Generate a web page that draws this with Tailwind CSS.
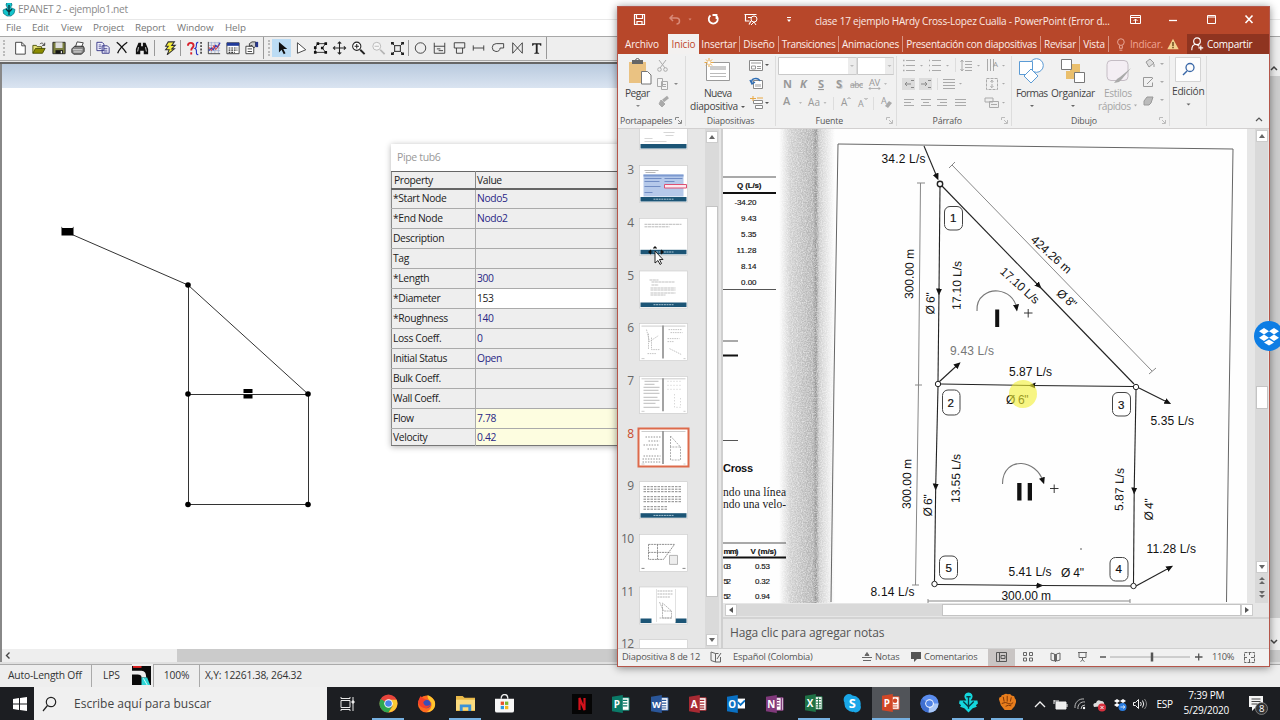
<!DOCTYPE html>
<html lang="es">
<head>
    <meta charset="UTF-8">
    <meta name="viewport" content="width=device-width, initial-scale=1.0">
    <title>EPANET 2 - ejemplo1.net</title>
    <script src="https://cdn.jsdelivr.net/npm/@tailwindcss/browser@4"></script>
</head>
<body class="relative h-[720px] w-[1280px] overflow-hidden bg-white font-['Open_Sans',sans-serif] text-[10px] leading-none text-[#333]">

    <!-- EPANET -->
    <div class="flex h-[687px] w-full flex-col bg-white">
        <div class="flex h-5 shrink-0 items-center border-b border-[#e8e8e8] pl-0.5">
            <svg class="h-[14px] w-[14px]" viewBox="0 0 14 14">
                <path d="M4 2a3 3 0 0 1 6 0l-1.500 2.500 4.500 2-1 4-3 2.500H5L1.500 10.500 1 7l4.500-2z" fill="#12c4cc" stroke="#0b6b78" stroke-width=".7"/>
                <path d="M7 2v10M4 6l3 3 3-3" stroke="#0c2f3a" stroke-width="1.300" fill="none"/>
            </svg>
            <span class="ml-0.5 text-[10.2px] tracking-[-0.3px] text-[#8a8a8a]">EPANET 2 - ejemplo1.net</span>
        </div>
        <div class="flex h-4 shrink-0 items-center text-[9.8px] tracking-[-0.1px] text-[#777]">
            <span class="w-[26px] pl-1.5">File</span>
            <span class="w-7 pl-1.5">Edit</span>
            <span class="w-[33px] pl-[7px]">View</span>
            <span class="w-[42px] pl-1.5">Project</span>
            <span class="w-[41px] pl-1.5">Report</span>
            <span class="w-[49px] pl-[7px]">Window</span>
            <span class="pl-1.5">Help</span>
        </div>
        <div class="flex h-[25px] shrink-0 items-center border-y border-[#a8a8a8] bg-[#eeeeee] pl-[3px] pb-px">
            <div class="mr-[5px] h-4 border-l-2 border-dotted border-[#bbb]"></div>
            <div class="flex w-[78px] justify-around">
                <svg class="size-[14px]" viewBox="0 0 16 16"><path d="M3 1.500h7l4 4v9.500H3z" fill="#fff" stroke="#333"/><path d="M10 1.500v4h4" fill="none" stroke="#333"/></svg>
                <svg class="size-[14px]" viewBox="0 0 16 16"><path d="M1 14V5h4l1 1.500h5V9" fill="#e8e37a" stroke="#444a00"/><path d="M1 14l3-5.500h11L12 14z" fill="#8b8b00" stroke="#444a00"/><path d="M9 3.500c2-2 4-1 5 1.500M14.500 2v3h-3" fill="none" stroke="#333"/></svg>
                <svg class="size-[14px]" viewBox="0 0 16 16"><path d="M1 1.500h14v13H1z" fill="#7c8040" stroke="#222"/><path d="M4 1.500h8V8H4z" fill="#dfdfdf"/><path d="M4 10.500h8.500v4H4z" fill="#151515"/><path d="M10 11.500h1.500v2.500H10z" fill="#eee"/></svg>
                <svg class="size-[14px]" viewBox="0 0 16 16"><path d="M5 7l2-6 7 1-2 5" fill="#fff" stroke="#333"/><path d="M1 9l3-3h10l1 2v4l-3 3H3l-2-2z" fill="#888" stroke="#222"/><path d="M2 10h11M3 12.500h9" stroke="#eee"/></svg>
            </div>
            <div class="mx-[2px] h-4 w-px bg-[#999]"></div>
            <div class="flex w-[59px] justify-around">
                <svg class="size-[14px]" viewBox="0 0 16 16"><path d="M1 1.500h6l2 2V11H1zM7 5.500h6l2 2V14H7z" fill="#f3f3ff" stroke="#2c2c80"/><path d="M3 4.500h3M3 6.500h3M3 8.500h3M9 8.500h4M9 10.500h4M9 12.500h4" stroke="#2c2c80" stroke-width=".8"/></svg>
                <svg class="size-[14px]" viewBox="0 0 16 16"><path d="M2 1.500c4 3 8 8 11 12M14 1.500C9 5 5 9 3 14" fill="none" stroke="#111" stroke-width="1.500"/></svg>
                <svg class="size-[14px]" viewBox="0 0 16 16"><path d="M4 2h3v4h2V2h3l3 7v6h-5v-4H6v4H1V9z" fill="#111"/><path d="M4 7l-1 5M12 7l1 5" stroke="#ddd"/></svg>
            </div>
            <div class="ml-[2px] mr-[5px] h-4 w-px bg-[#999]"></div>
            <div class="flex w-[20px] justify-center">
                <svg class="size-[14px]" viewBox="0 0 16 16"><path d="M6 1h7l-3 4h4l-4 4h3l-8 6.500L7 10H3l3-4H3z" fill="#f6ee3c" stroke="#333" stroke-width="1.200"/></svg>
            </div>
            <div class="mr-[3px] h-4 w-px bg-[#999]"></div>
            <div class="flex w-[78px] justify-around">
                <svg class="size-[15px]" viewBox="0 0 16 16"><path d="M1 5c0-4 6-4 6 0 0 2-2.500 2-2.500 5M4.500 12v2.500" stroke="#d8202c" stroke-width="2" fill="none"/><path d="M12 1.500c-4 0 0 5-3.500 6.500C12 9 8 14.500 12 14.500" stroke="#2a35c8" stroke-width="1.200" fill="none"/><path d="M15 1v14" stroke="#222" stroke-width="1.500" stroke-dasharray="2 1.500"/></svg>
                <svg class="size-[14px]" viewBox="0 0 16 16"><path d="M2 2h13M2 5h13M2 8h13M2 11h13M5 1v13M9 1v13M13 1v13" stroke="#9aa6cc" stroke-width=".8"/><path d="M1.500 1v13.500H15" stroke="#333" fill="none"/><path d="M2 11l3-3 2 2 3-5 2 2 3-5" stroke="#2838c0" fill="none" stroke-width="1.300"/><path d="M2 7l3 4 3-6 2 5 4-6" stroke="#d33" fill="none"/></svg>
                <svg class="size-[14px]" viewBox="0 0 16 16"><path d="M1 2h14v12.500H1z" fill="#fff" stroke="#333"/><path d="M1 2h14v3.500H1z" fill="#203a9a"/><path d="M3 8h10M3 10.500h10M3 13h7" stroke="#333" stroke-width="1.300" stroke-dasharray="2 1"/></svg>
                <svg class="size-[14px]" viewBox="0 0 16 16"><path d="M1 6h9v8.500H1z" fill="#fff" stroke="#333"/><path d="M3 9h5M3 12h5" stroke="#333"/><path d="M5 6V3l3-2h4v5l-2 2-2-3z" fill="#ccc" stroke="#333"/><path d="M12 1h3v6h-3z" fill="#27368c"/></svg>
            </div>
            <div class="ml-px mr-[4px] h-[22px] w-px bg-[#999]"></div>
            <div class="h-4 border-l-2 border-dotted border-[#bbb]"></div>
            <div class="ml-[2px] flex w-[135px] items-center justify-between">
                <div class="flex h-[18px] w-[19px] shrink-0 items-center justify-center bg-[#bcdcf4]"><svg class="size-[14px]" viewBox="0 0 16 16"><path d="M4.500 1v12l3-3 2.500 5 2-1-2.500-5H14z" fill="#111"/></svg></div>
                <svg class="h-[14px] w-[19px]" viewBox="0 0 16 16"><path d="M4.500 2v12L14 10z" fill="#fff" stroke="#333"/></svg>
                <svg class="h-[14px] w-[19px]" viewBox="0 0 16 16"><path d="M2 13V7l3-4h9l-4 5 4 5z" fill="none" stroke="#222"/><path d="M.5 11.500h3v3h-3zM.5 6h3v3h-3zM3.500 1.500h3v3h-3zM12.500 1.500h3v3h-3zM8.500 6.500h3v3h-3zM12.500 11.500h3v3h-3z" fill="#111"/></svg>
                <svg class="h-[14px] w-[19px]" viewBox="0 0 16 16"><path d="M8 1v14M1 8h14M6 3l2-2 2 2M6 13l2 2 2-2M3 6L1 8l2 2M13 6l2 2-2 2" fill="none" stroke="#222" stroke-width="1.200"/></svg>
                <svg class="h-[14px] w-[19px]" viewBox="0 0 16 16"><circle cx="6" cy="6" r="4.700" fill="#fff" stroke="#222" stroke-width="1.200"/><path d="M3.500 6h5M6 3.500v5" stroke="#222" stroke-width="1.200"/><path d="M10 10l5 5" stroke="#222" stroke-width="2.200"/></svg>
                <svg class="h-[14px] w-[19px]" viewBox="0 0 16 16"><circle cx="6" cy="6" r="4.500" fill="#f6f6f6" stroke="#b4b4b4"/><path d="M3.500 6h5" stroke="#b4b4b4"/><path d="M10 10l5 5" stroke="#b4b4b4" stroke-width="2"/></svg>
                <svg class="h-[13px] w-[19px]" viewBox="0 0 16 16"><path d="M4.500 4.500h7v7h-7zM1 1l3.500 3.500M15 1l-3.500 3.500M1 15l3.500-3.500M15 15l-3.500-3.500" fill="none" stroke="#222" stroke-width="1.200"/><path d="M0 0h3.500v3H0zM12.500 0H16v3h-3.500zM0 13h3.500v3H0zM12.500 13H16v3h-3.500z" fill="#222"/></svg>
            </div>
            <div class="ml-px mr-[2px] h-4 w-px bg-[#999]"></div>
            <div class="flex w-[135px] items-center justify-between">
                <svg class="h-[14px] w-[19px]" viewBox="0 0 16 16"><circle cx="8" cy="8" r="6" fill="none" stroke="#333"/></svg>
                <svg class="h-[14px] w-[19px]" viewBox="0 0 16 16"><path d="M2 2v12h12V2M2 6h12M5 9h4M7 11h5" fill="none" stroke="#333"/></svg>
                <svg class="h-[14px] w-[19px]" viewBox="0 0 16 16"><path d="M2 2h12v6H2zM4.500 8v6h7V8" fill="none" stroke="#333"/></svg>
                <svg class="h-[14px] w-[19px]" viewBox="0 0 16 16"><path d="M2 8h12M2 5v6M14 5v6" fill="none" stroke="#333"/></svg>
                <svg class="h-[14px] w-[19px]" viewBox="0 0 16 16"><path d="M15 3v5h-4a4.500 4.500 0 1 1-4.500-5z" fill="none" stroke="#333"/></svg>
                <svg class="h-[14px] w-[19px]" viewBox="0 0 16 16"><path d="M2.500 2v12l11-12v12z" fill="none" stroke="#333"/></svg>
                <svg class="h-[14px] w-[19px]" viewBox="0 0 16 16"><path d="M3 2.500h10.500v3h-1L11.500 4H9.300v9l1.700.8v.7H5.500v-.7l1.700-.8V4H5L4 5.500H3z" fill="#222"/></svg>
            </div>
            <div class="h-[22px] w-px bg-[#999]"></div>
        </div>
        <div class="h-[3px] shrink-0 border-b-2 border-[#666] bg-[#e6e6e6]"></div>

        <div class="flex min-h-0 grow">
            <div class="flex w-full flex-col border-l-2 border-[#888]">
                <div class="h-6 bg-linear-to-b from-[#b9cade] to-[#dae4f1]"></div>
                <div class="relative grow">
                    <!-- network map -->
                    <svg class="h-full w-full" viewBox="2 88 1278 561" preserveAspectRatio="xMinYMin meet">
                        <g stroke="#333" fill="none">
                            <path d="M72 234.500L188 285L308 394"/>
                            <path d="M188 285V504.500H308V394H188" shape-rendering="crispEdges"/>
                        </g>
                        <g fill="#000">
                            <path d="M61.500 226.500l1 1.500h10l1-1.500v9h-12z"/>
                            <circle cx="188" cy="285" r="2.800"/><circle cx="188" cy="394" r="2.800"/><circle cx="308" cy="394" r="2.800"/>
                            <circle cx="188" cy="504.500" r="2.800"/><circle cx="308" cy="504.500" r="2.800"/>
                            <path d="M243.500 389h9v4h-9zM243.500 394.500h9v4h-9z"/>
                        </g>
                    </svg>
                    <!-- property editor -->
                    <div class="absolute left-[389px] top-[56px] w-[250px] bg-white shadow-[0_1px_6px_rgba(0,0,0,0.3)]">
                        <div class="flex h-[27px] items-center pl-1.5 text-[10.5px] tracking-[-0.35px] text-[#999]">Pipe tub6</div>
                        <table class="w-full table-fixed border-collapse border-t border-l border-t-[#666] border-l-[#888] bg-[#eeeeee] text-[10.3px] leading-none tracking-[-0.35px] text-[#222]">
                            <tr class="h-[17px] border-b-2 border-[#666]"><td class="w-[84px] border-r border-[#888] pl-0.5">Property</td><td class="pl-px">Value</td></tr>
                            <tr class="h-5 border-b border-[#aaa]"><td class="border-r border-[#aaa] pb-0.5 pl-px">*Start Node</td><td class="pb-0.5 pl-px text-[#2a2785]">Nodo5</td></tr>
                            <tr class="h-5 border-b border-[#aaa]"><td class="border-r border-[#aaa] pb-px pl-px">*End Node</td><td class="pb-px pl-px text-[#2a2785]">Nodo2</td></tr>
                            <tr class="h-5 border-b border-[#aaa]"><td class="border-r border-[#aaa] pb-px pl-px">Description</td><td></td></tr>
                            <tr class="h-5 border-b border-[#aaa]"><td class="border-r border-[#aaa] pb-px pl-px">Tag</td><td></td></tr>
                            <tr class="h-5 border-b border-[#aaa]"><td class="border-r border-[#aaa] pb-px pl-px">*Length</td><td class="pb-px pl-px text-[#2a2785]">300</td></tr>
                            <tr class="h-5 border-b border-[#aaa]"><td class="border-r border-[#aaa] pb-px pl-px">*Diameter</td><td class="bg-white pb-px pl-px">153</td></tr>
                            <tr class="h-5 border-b border-[#aaa]"><td class="border-r border-[#aaa] pb-px pl-px">*Roughness</td><td class="pb-px pl-px text-[#2a2785]">140</td></tr>
                            <tr class="h-5 border-b border-[#aaa]"><td class="border-r border-[#aaa] pb-px pl-px">Loss Coeff.</td><td class="pb-px pl-px text-[#2a2785]">0</td></tr>
                            <tr class="h-5 border-b border-[#aaa]"><td class="border-r border-[#aaa] pb-px pl-px">Initial Status</td><td class="pb-px pl-px text-[#2a2785]">Open</td></tr>
                            <tr class="h-5 border-b border-[#aaa]"><td class="border-r border-[#aaa] pb-px pl-px">Bulk Coeff.</td><td></td></tr>
                            <tr class="h-5 border-b border-[#aaa]"><td class="border-r border-[#aaa] pb-px pl-px">Wall Coeff.</td><td></td></tr>
                            <tr class="h-5 border-b border-[#aaa]"><td class="border-r border-[#aaa] pb-px pl-px">Flow</td><td class="bg-[#fdfde0] pb-px pl-px text-[#2a2785]">7.78</td></tr>
                            <tr class="h-[17px] border-b border-[#777]"><td class="border-r border-[#aaa] pl-px">Velocity</td><td class="bg-[#fdfde0] pl-px text-[#2a2785]">0.42</td></tr>
                        </table>
                    </div>
                    <!-- map scrollbar, seen right of the front window -->
                    <div class="absolute right-0 -top-7 flex h-[590px] w-3 flex-col items-center justify-between bg-[#eeeeee] py-1">
                        <svg class="w-2" viewBox="0 0 8 8"><path d="M1 6l3-3 3 3" fill="none" stroke="#444" stroke-width="1.500"/></svg>
                        <div class="mb-5 mt-1 w-full grow bg-[#cdcdcd]"></div>
                        <svg class="w-2" viewBox="0 0 8 8"><path d="M1 2l3 3 3-3" fill="none" stroke="#444" stroke-width="1.500"/></svg>
                    </div>
                </div>
                <div class="flex h-[13px] shrink-0 bg-[#eeeeee]">
                    <svg class="ml-0.5 w-2" viewBox="0 0 8 13"><path d="M5.500 3.500l-3 3 3 3" fill="none" stroke="#444" stroke-width="1.400"/></svg>
                    <div class="ml-[165px] grow bg-[#cbcbcb]"></div>
                </div>
            </div>
        </div>
        <div class="flex h-[25px] shrink-0 items-center border-t-2 border-[#e0e0e0] bg-[#eeeeee] text-[10.3px] tracking-[-0.2px] text-[#333]">
            <div class="flex h-full w-[92px] items-center border-r border-t border-[#aaa] pb-0.5 pl-2">Auto-Length Off</div>
            <div class="flex h-full w-[40px] items-center border-t border-[#aaa] pb-0.5 pl-[11px]">LPS</div>
            <svg class="h-[19px] w-[19px]" viewBox="0 0 20 20"><path d="M0 0h20v20H0z" fill="#0a0a0a"/><path d="M1 0h9v2H1z" fill="#d22"/><path d="M0 5h10q5 0 5 7h-5q0-3-4-3H0z" fill="#eee"/><path d="M10 12h6l3 8h-9z" fill="#2fd6d6"/><path d="M12 13l4 7" stroke="#dff"/></svg>
            <div class="ml-0.5 flex h-full w-[47px] items-center justify-center border-x border-t border-[#aaa] pb-0.5">100%</div>
            <div class="flex h-full grow items-center border-t border-[#aaa] pb-0.5 pl-[5px]">X,Y: 12261.38, 264.32</div>
        </div>
    </div>

    <!-- PowerPoint -->
    <div class="absolute left-[617px] top-[6px] flex h-[661px] w-[653px] flex-col border border-[#b5564a] bg-[#e6e6e6] shadow-[0_1px_8px_rgba(0,0,0,0.45)]">
        <div class="flex h-[27px] shrink-0 items-center bg-[#b7472a]">
            <svg class="h-[27px] w-[196px] shrink-0" viewBox="618 7 196 27" fill="none" stroke="#fff">
                <path d="M634.500 14.500h10v10h-10zM636.500 14.500v4h6v-4M637 24.500v-3h5v3" stroke-width="1.200"/>
                <g stroke="#d98a78"><path d="M673 15l-3 3 3 3M670.500 18h6c4 0 4 6 0 6" stroke-width="1.500"/><path d="M688.500 18.500h3l-1.500 2z" fill="#d98a78" stroke="none"/></g>
                <path d="M710.500 15.500a4.500 4.500 0 1 0 5.500 0M716.500 19v-4h-4" stroke-width="1.800"/>
                <path d="M744.500 14.500h12M745.500 15v6h4M749 24.500l2-3.500M748 17.500h4" stroke-width="1.200"/><circle cx="754" cy="19" r="3"/><path d="M751 25l3-3 2 3"/>
                <path d="M787 17.500h4"/><path d="M787 19.500h4l-2 2.500z" fill="#fff" stroke="none"/>
            </svg>
            <span class="w-[315px] whitespace-nowrap pl-px text-[10px] tracking-[-0.2px] text-[#fbe9e4]">clase 17 ejemplo HArdy Cross-Lopez Cualla - PowerPoint (Error d...</span>
            <svg class="h-[27px] w-[140px] shrink-0" viewBox="1129 7 140 27" fill="none" stroke="#fff">
                <path d="M1130.500 15.500h10v8h-10zM1130.500 17.500h10M1135.500 23v-4M1133.500 21l2-2 2 2"/>
                <path d="M1169 20.500h8" stroke-width="1.300"/>
                <path d="M1207.500 15.500h8v8h-8zM1207.500 17h8" stroke-width="1"/>
                <path d="M1245.500 15.500l7 7.500M1252.500 15.500l-7 7.500" stroke-width="1.600"/>
            </svg>
        </div>
        <div class="flex h-[20px] shrink-0 items-stretch bg-[#b7472a] text-[10px] tracking-[-0.15px] text-[#fdeeea]">
            <div class="flex w-[50px] items-center pl-[7px]">Archivo</div>
            <div class="flex w-[31px] items-center justify-center bg-[#f3f1f0] text-[#c0472b]">Inicio</div>
            <div class="my-0.5 flex w-[41px] items-center justify-center border-r border-[#d99483]">Insertar</div>
            <div class="my-0.5 flex w-[39px] items-center justify-center border-r border-[#d99483]">Diseño</div>
            <div class="my-0.5 flex w-[60px] items-center justify-center border-r border-[#d99483] tracking-[-0.4px]">Transiciones</div>
            <div class="my-0.5 flex w-[64px] items-center justify-center border-r border-[#d99483] tracking-[-0.25px]">Animaciones</div>
            <div class="my-0.5 flex w-[138px] items-center justify-center whitespace-nowrap border-r border-[#d99483] tracking-[-0.25px]">Presentación con diapositivas</div>
            <div class="my-0.5 flex w-[39px] items-center justify-center border-r border-[#d99483] tracking-[-0.25px]">Revisar</div>
            <div class="my-0.5 flex w-[29px] items-center justify-center border-r border-[#d99483]">Vista</div>
            <svg class="h-[20px] w-5" viewBox="0 0 20 21" fill="none" stroke="#e9a99a"><circle cx="12" cy="8.500" r="3.500"/><path d="M10.500 12v3h3v-3M10.500 17h3"/></svg>
            <div class="flex w-[37px] items-center pl-px tracking-[-0.2px] text-[#f0a595]">Indicar.</div>
            <svg class="h-[20px] w-[14px]" viewBox="0 0 14 21"><path d="M7 5l6 11H1z" fill="#f3cf8e"/><path d="M7 8.500v4M7 13.500v1.500" stroke="#5a3a10" stroke-width="1.400"/></svg>
            <div class="ml-auto flex w-[82px] items-center bg-[#8f3420] tracking-[-0.25px] text-white">
                <svg class="h-[20px] w-5" viewBox="0 0 20 21" fill="none" stroke="#fff" stroke-width="1.200"><circle cx="10" cy="7.500" r="3.500"/><path d="M4.500 17c0-4 2-6 4-6s3 1 4 2M14 12v5M11.500 14.500h5"/></svg>
                Compartir
            </div>
        </div>

        <!-- ribbon -->
        <div class="flex h-[75px] shrink-0 border-b border-[#d2d0d0] bg-[#f1f1f1] text-[8.800px] leading-none tracking-[-0.15px] text-[#555]">
            <div class="my-0.5 flex w-[68px] flex-col justify-between border-r border-[#ddd]">
                <svg class="h-[58px] w-[67px]" viewBox="618 56 67 58" fill="none">
                    <path d="M629 62h17v21h-17z" fill="#eac282"/><path d="M632 60h11v4h-11z" fill="#666"/><path d="M635.500 60.500a2 2 0 0 1 4 0" stroke="#666"/>
                    <path d="M641.500 71.500h6l3.500 3.500v9h-9.500z" fill="#fff" stroke="#777"/>
                    <g stroke="#aaa"><path d="M659 60l6 8M666 60l-6 8"/><circle cx="659.500" cy="69.500" r="1.800"/><circle cx="665.500" cy="69.500" r="1.800"/><path d="M657.500 78.500h5v8h-5zM661.500 81.500h6v8h-6z" fill="#f4f4f4"/><path d="M663 84.500h3M663 86.500h3"/><path d="M663 101l5-4" stroke-width="3"/><path d="M661 100l4 4-3 3-3-3z" fill="#aaa"/></g>
                    <path d="M674 83h4l-2 2zM636 105h4l-2 2z" fill="#888"/>
                    <text x="625" y="97" font-size="10.200" textLength="25" fill="#444">Pegar</text>
                </svg>
                <div class="flex justify-between pr-[3px] pl-0.5">Portapapeles<svg class="size-[7px]" viewBox="0 0 7 7" fill="none" stroke="#888"><path d="M.5 3V.5H4M3 3l3 3M6.500 3v3.500H3"/></svg></div>
            </div>
            <div class="my-0.5 flex w-[90px] flex-col justify-between border-r border-[#ddd]">
                <svg class="h-[58px] w-[89px]" viewBox="686 56 89 58" fill="none">
                    <path d="M706.500 62.500h23v18h-23z" fill="#fff" stroke="#999"/><path d="M710 66h16v4h-16z" fill="#ccc"/><path d="M710 73.500h16M710 76.500h16" stroke="#bbb"/>
                    <path d="M709 58v9M704.500 62.500h9M706 59.500l6 6M712 59.500l-6 6" stroke="#e8a845"/><circle cx="709" cy="62.500" r="1.500" fill="#fff"/>
                    <path d="M749.500 60.500h13v10h-13z" fill="#fff" stroke="#888"/><path d="M751 63h10M751.500 66h4v3h-4zM757 66.500h4M757 68.500h4" stroke="#999"/>
                    <path d="M753.500 80.500h9v8h-9z" fill="#fff" stroke="#888"/><path d="M755 84h6v3h-6z" fill="#ccc"/><path d="M752 83c-2-5 6-6 8-2M750 80l2 4 3-2" stroke="#2f6eb5" stroke-width="1.500"/>
                    <path d="M753.500 100.500h9v3h-9zM755.500 105.500h7v3h-7z" fill="#fff" stroke="#888"/><path d="M750 98.500h6M753 96v5M757 98h6" stroke="#e8a845"/>
                    <path d="M765 64h4l-2 2zM765 102h4l-2 2zM741 106h4l-2 2z" fill="#555"/>
                    <text x="704" y="97" font-size="10.200" textLength="28" fill="#444">Nueva</text>
                    <text x="690" y="110" font-size="10.200" textLength="48" fill="#444">diapositiva</text>
                </svg>
                <div class="text-center">Diapositivas</div>
            </div>
            <div class="my-0.5 flex w-[121px] flex-col justify-between border-r border-[#ddd]">
                <svg class="h-[58px] w-[120px]" viewBox="776 56 120 58" fill="none">
                    <path d="M778.500 57.500h78v17h-78zM857.500 57.500h36v17h-36z" fill="#fff" stroke="#c9c9c9"/><path d="M848 58h8.500v16H848zM885 58h8.500v16H885z" fill="#ececec"/>
                    <path d="M850 65h4l-2 2zM887.500 65h4l-2 2zM884 83h3l-1.500 2zM799 102h3l-1.500 2zM823.500 102h3l-1.500 2z" fill="#bbb"/>
                    <g fill="#999" font-weight="bold" font-size="11"><text x="783" y="88">N</text><text x="800" y="88" font-style="italic">K</text><text x="818" y="88" text-decoration="underline">S</text><text x="837" y="88.500" fill="#ccc">S</text><text x="836" y="88">S</text><text x="783" y="105" font-weight="600">A</text></g>
                    <text x="850" y="88" font-size="8.500" textLength="13" fill="#999" text-decoration="line-through">abc</text>
                    <text x="869" y="86" font-size="9.500" textLength="11" fill="#999">AV</text><path d="M869 88.500h11M870.500 87l-1.500 1.500 1.500 1.500M878.500 87l1.500 1.500-1.500 1.500" stroke="#999" stroke-width=".7"/>
                    <text x="808" y="106" font-size="10" textLength="12" fill="#999">Aa</text>
                    <text x="841" y="106" font-size="10" fill="#999">A</text><path d="M847.500 99l1.500-1.500 1.500 1.500M864.500 98l1.500 1.500 1.500-1.500" stroke="#999"/>
                    <text x="858" y="107" font-size="9" fill="#999">A</text><text x="881" y="104" font-size="9" fill="#999">A</text><path d="M885 106l4-5 3 2-4 5z" fill="#aaa"/>
                    <path d="M833.500 97v13M873.500 97v13" stroke="#ddd"/>
                </svg>
                <div class="flex justify-end pr-[3px]"><span class="mr-[43px]">Fuente</span><svg class="size-[7px]" viewBox="0 0 7 7" fill="none" stroke="#bbb"><path d="M.5 3V.5H4M3 3l3 3M6.500 3v3.500H3"/></svg></div>
            </div>
            <div class="my-0.5 flex w-[115px] flex-col justify-between border-r border-[#ddd]">
                <svg class="h-[58px] w-[114px]" viewBox="897 56 114 58" fill="none" stroke="#aaa">
                    <path d="M906 60.500h9M906 65.500h9M906 70.500h9M932 60.500h9M932 65.500h9M932 70.500h9"/><path d="M903 60.500h1.500M903 65.500h1.500M903 70.500h1.500M929 60.500h1M929 65.500h1M929 70.500h1" stroke-width="1.500"/>
                    <path d="M920 65h3l-1.500 1.500zM946 65h3l-1.500 1.500zM977 65h3l-1.500 1.500zM1002 65h3l-1.500 1.500zM1002 83h3l-1.500 1.500zM1002 102h3l-1.500 1.500zM959 83h3l-1.500 1.500z" fill="#aaa" stroke="none"/>
                    <path d="M902 78h13v12h-13zM919 78h13v12h-13z" fill="#dcdcdc" stroke="none"/><path d="M911 84h-6M907 82l-2 2 2 2M921 84h6M925 82l2 2-2 2M911 80.500h3M911 87.500h3M928 80.500h3M928 87.500h3" stroke="#888"/>
                    <path d="M955.500 58v14M937.500 78v12" stroke="#ddd"/>
                    <path d="M965 61.500h7M965 64.500h7M965 67.500h7M965 70.500h7M962 60v11M960.500 62l1.500-2 1.500 2M960.500 69l1.500 2 1.500-2"/>
                    <path d="M987.500 59v12M990.500 59v12M993.500 59v12"/><text x="993" y="67" font-size="8" fill="#999" stroke="none">A</text>
                    <path d="M943 79.500h12M943 82.500h12M943 85.500h12M943 88.500h12"/>
                    <path d="M986.500 78.500h11v11h-11zM992 80v8M990.500 82l1.500-2 1.500 2M990.500 86l1.500 2 1.500-2" stroke-dasharray="3 1"/>
                    <path d="M904 99.500h10M904 102.500h7M904 105.500h10M921 99.500h10M923 102.500h6M921 105.500h10M937 99.500h10M940 102.500h7M937 105.500h10M955 99.500h11M955 102.500h11M955 105.500h11"/>
                    <path d="M985 98h8v4h-8zM989.500 101.500h9v6h-9zM991 104.500h6" fill="#eee"/>
                </svg>
                <div class="flex justify-end pr-[3px]"><span class="mr-[39px]">Párrafo</span><svg class="size-[7px]" viewBox="0 0 7 7" fill="none" stroke="#bbb"><path d="M.5 3V.5H4M3 3l3 3M6.500 3v3.500H3"/></svg></div>
            </div>
            <div class="my-0.5 flex w-[158px] flex-col justify-between border-r border-[#ddd]">
                <svg class="h-[58px] w-[157px]" viewBox="1012 56 157 58" fill="none">
                    <circle cx="1036.500" cy="65.500" r="6.800" fill="#fff" stroke="#5b9bd5"/><path d="M1019.500 61.500h13v13h-13z" fill="#fff" stroke="#5b9bd5"/><path d="M1031 69l7 7-7 7-7-7z" fill="#fff" stroke="#5b9bd5"/>
                    <path d="M1070 64h10v9h-10zM1066 71h9v8h-9z" fill="#eabf6c"/><path d="M1061.500 59.500h10v10h-10zM1074.500 72.500h10v10h-10z" fill="#fff" stroke="#777"/>
                    <rect x="1107" y="60.500" width="21" height="20" rx="4" fill="#f4eef4" stroke="#c4bcc4"/><path d="M1131 68l-9 11-3 3-5 1 3-4 3-2z" fill="#aaa"/>
                    <g stroke="#999"><path d="M1146 62l4-3 4 4-5 4zM1154 64v3" fill="#ddd"/><path d="M1143.500 77.500h9M1143.500 77.500v9h9v-4M1147 84l6-6" /><path d="M1144 101l3-4h6l-2 6-2 2h-5z" fill="#bbb"/></g>
                    <path d="M1160 63h4l-2 2zM1160 81h4l-2 2zM1160 99h4l-2 2zM1134 104.500h3l-1.500 2z" fill="#aaa"/>
                    <path d="M1030 105h4l-2 2zM1071 105h4l-2 2z" fill="#666"/>
                    <g font-size="10.200" fill="#444"><text x="1016" y="97" textLength="32">Formas</text><text x="1051" y="97" textLength="44">Organizar</text></g>
                    <g font-size="10.200" fill="#a5a5a5"><text x="1104" y="97" textLength="28">Estilos</text><text x="1098" y="110" textLength="33">rápidos</text></g>
                </svg>
                <div class="flex justify-end pr-[3px]"><span class="mr-[62px]">Dibujo</span><svg class="size-[7px]" viewBox="0 0 7 7" fill="none" stroke="#bbb"><path d="M.5 3V.5H4M3 3l3 3M6.500 3v3.500H3"/></svg></div>
            </div>
            <div class="my-0.5 w-[37px] border-r border-[#ddd]">
                <svg class="h-[58px] w-9" viewBox="1170 56 36 58" fill="none">
                    <path d="M1175.500 57.500h25v24h-25z" fill="#fdfdfd" stroke="#d4d4d4"/><circle cx="1190" cy="67.500" r="4" stroke="#3a68a8" stroke-width="1.300"/><path d="M1187 71l-4 4" stroke="#3a68a8" stroke-width="1.500"/>
                    <text x="1172" y="95" font-size="10.200" textLength="32.500" fill="#444">Edición</text><path d="M1186.500 103.500h4l-2 2z" fill="#666"/>
                </svg>
            </div>
            <div class="flex grow items-end justify-end p-1.5"><svg class="w-2" viewBox="0 0 8 6"><path d="M1 5l3-3 3 3" fill="none" stroke="#555" stroke-width="1.200"/></svg></div>
        </div>

        <div class="flex min-h-0 grow">
            <!-- slide thumbnails -->
            <div class="h-full w-[87px] shrink-0 overflow-hidden">
                <svg class="h-[519px] w-[87px]" viewBox="618 129 87 519">
                    <defs>
                        <g id="page"><rect width="48" height="37" fill="#fff" stroke="#c9c9c9" stroke-width=".6"/></g>
                        <g id="foot"><rect x="1" y="31.500" width="46" height="4.500" fill="#1c5576"/><path d="M14 33.700h20" stroke="#a9c4d3" stroke-width="1" stroke-dasharray="2 .6"/></g>
                        <g id="book"><path d="M23.500 2v33" stroke="#999" stroke-width="1.800"/><path d="M2 2.500h44M2 35h3M46 35h-2" stroke="#999" stroke-width=".5"/></g>
                    </defs>
                    <g transform="translate(639.500 112.500)"><use href="#page"/><rect x="1" y="31.500" width="46" height="4.500" fill="#1c5576"/><path d="M24 20h11M26 23h8M5 26h8M5 29h22" stroke="#bbb" stroke-width=".6"/></g>
                    <g transform="translate(639.500 165.500)"><use href="#page"/><path d="M5 5h14M6 7h10" stroke="#999" stroke-width=".7"/><path d="M4 9h40v22H4z" fill="#b5c9ea"/><path d="M4 9h40v2H4z" fill="#7d9ad0"/><path d="M5 13h17M5 16h15M5 21h16M25 13h18M25 16h10M5 27h8" stroke="#5f7dba" stroke-width=".8"/><path d="M25 19h22v3.500H25z" fill="#fbe9ef" stroke="#dd5072"/><use href="#foot"/></g>
                    <g transform="translate(639.500 218.300)"><use href="#page"/><path d="M5 6h37M5 8.500h25" stroke="#aaa" stroke-width=".8" stroke-dasharray="3 .5"/><use href="#foot"/></g>
                    <g transform="translate(639.500 271)"><use href="#page"/><path d="M10 9h9M12 11h23M12 14h7M11 17h25M11 19h25M11 22h25M11 24h15" stroke="#999" stroke-width=".6" stroke-dasharray="3 .4"/><use href="#foot"/></g>
                    <g transform="translate(639.500 323.600)"><use href="#page"/><use href="#book"/><path d="M7 6l3 12 9-6M9 10v16M12 14v12h8M29 6h13M31 9h12M28 15h12M28 18h6M30 25l12 6M8 30h9" stroke="#aaa" stroke-width=".7" stroke-dasharray="1.500 .8" fill="none"/></g>
                    <g transform="translate(639.500 376.300)"><use href="#page"/><use href="#book"/><path d="M5 5h14M5 8h10M4 11h16M4 14h15M4 17h16M4 21h14M4 24h16M4 27h12M4 31h16" stroke="#aaa" stroke-width=".8"/><path d="M28 5h15M28 9h15M28 13h15M35 18v13h6V22" stroke="#bbb" stroke-width=".8" stroke-dasharray="1 2" fill="none"/></g>
                    <g transform="translate(639.500 429)"><rect x="-1" y="-.5" width="50" height="38" fill="#fff" stroke="#dd6a4b" stroke-width="2"/><use href="#book"/><path d="M6 8h15M9 12h11M4 16h16M8 20h10M4 27h17M3 30h18M3 33h18" stroke="#888" stroke-width=".9" stroke-dasharray="1.500 1.200"/><path d="M31 7l10 11H31V31H41V18M31 7v11" stroke="#999" stroke-width=".8" fill="none" stroke-dasharray="2 1"/></g>
                    <g transform="translate(639.500 481.700)"><use href="#page"/><path d="M4 5h38M4 7.500h38M4 10h38M4 15h38M4 17.500h38M4 20h38M4 25h24M4 27.500h24" stroke="#888" stroke-width="1" stroke-dasharray="2.500 1"/><use href="#foot"/></g>
                    <g transform="translate(639.500 534.400)"><use href="#page"/><path d="M9 10h26L24 25H9zM9 18h22M18 10v15" stroke="#777" stroke-width=".8" fill="none" stroke-dasharray="2 .7"/><path d="M30 21h8v9h-8z" fill="#eee" stroke="#999" stroke-width=".7"/><path d="M2 34h3M46 34h-3" stroke="#888"/></g>
                    <g transform="translate(639.500 587)"><use href="#page"/><rect x="1" y="31.500" width="46" height="4.500" fill="#1c5576"/><path d="M12 1h24v35H12z" fill="#fff"/><path d="M17 2v33M36 2v33" stroke="#ccc" stroke-width=".6"/><path d="M18 4h15M18 7h15M18 10h13M20 15l4 9h8l-9-8v15h9V24M20 31h13" stroke="#999" stroke-width=".7" stroke-dasharray="2 .6" fill="none"/></g>
                    <g transform="translate(639.500 639.700)"><use href="#page"/></g>
                    <g fill="#666" font-size="12" text-anchor="end">
                        <text x="634" y="174">3</text><text x="634" y="226.500">4</text><text x="634" y="279.500">5</text><text x="634" y="332">6</text><text x="634" y="384.500">7</text>
                        <text x="634" y="437.500" fill="#c9492b">8</text><text x="634" y="490">9</text><text x="634" y="543" textLength="13">10</text><text x="634" y="595.500" textLength="13">11</text><text x="634" y="647.500" textLength="13">12</text>
                    </g>
                    <!-- mouse pointer -->
                    <path d="M655 251v12l3-2.500 2 4 1.500-1-2-4h3.500z" fill="#fff" stroke="#111" stroke-width=".9"/>
                    <path d="M649 252h2.500M651 250l-2 2 2 2M660.500 252h2M661 250l2 2-2 2M653.500 248.500l1.500-1.500 1.500 1.500" stroke="#111" fill="none" stroke-width="1.300"/>
                </svg>
            </div>
            <div class="flex w-[14px] shrink-0 flex-col items-center bg-[#dadada] py-0.5">
                <div class="flex h-3 w-3 shrink-0 items-center justify-center border border-[#ccc] bg-white"><svg class="w-1.5" viewBox="0 0 6 4"><path d="M0 4l3-4 3 4z" fill="#666"/></svg></div>
                <div class="mt-[63px] h-[391px] w-3 border border-[#c4c4c4] bg-white"></div>
                <div class="mt-auto flex h-3 w-3 shrink-0 items-center justify-center border border-[#ccc] bg-white"><svg class="w-1.5" viewBox="0 0 6 4"><path d="M0 0l3 4 3-4z" fill="#666"/></svg></div>
            </div>
            <div class="ml-[2px] flex min-w-0 grow flex-col border-l-2 border-[#cfcfcf]">
                <div class="flex h-[474px] shrink-0">
                    <!-- scanned page -->
                    <svg class="h-[474px] w-[524px] shrink-0 bg-[#fefefe] font-['Liberation_Sans',Arial,sans-serif]" viewBox="723 129 524 474">
                        <defs>
                            <linearGradient id="spine"><stop offset="0" stop-color="#888" stop-opacity="0"/><stop offset=".2" stop-color="#888" stop-opacity=".4"/><stop offset=".6" stop-color="#888" stop-opacity=".65"/><stop offset=".66" stop-color="#777" stop-opacity=".8"/><stop offset=".72" stop-color="#999" stop-opacity=".5"/><stop offset="1" stop-color="#999" stop-opacity="0"/></linearGradient>
                            <filter id="grain" x="0" y="0" width="1" height="1"><feTurbulence type="fractalNoise" baseFrequency=".8" numOctaves="2" seed="4"/><feColorMatrix values="0 0 0 0 1  0 0 0 0 1  0 0 0 0 1  1.200 0 0 0 -.4"/><feComposite in2="SourceGraphic" operator="in"/></filter>
                            <marker id="tip" viewBox="0 0 8 8" refX="4" refY="4" markerWidth="7" markerHeight="7" markerUnits="userSpaceOnUse" orient="auto"><path d="M0 .5L8 4L0 7.500z" fill="#111"/></marker>
                        </defs>
                        <path d="M779 129h56v474h-56z" fill="url(#spine)"/>
                        <path d="M779 129h56v474h-56z" fill="#fff" filter="url(#grain)"/>

                        <g stroke="#555"><path d="M723 177h53M723 289.500h53M723 341h15M723 440.500h15M723 543h63"/></g>
                        <path d="M723 193h53M723 355.500h15M723 557.500h63" stroke="#111" stroke-width="2.200"/>
                        <g font-size="8" fill="#111" stroke="#111" stroke-width=".15" text-anchor="end">
                            <text x="761.500" y="188" font-weight="bold" textLength="24.500">Q (L/s)</text>
                            <text x="756.500" y="204.500" textLength="22">-34.20</text><text x="756.500" y="220.500" textLength="15.500">9.43</text><text x="756.500" y="236.500" textLength="15.500">5.35</text><text x="756.500" y="252.500" textLength="20">11.28</text><text x="756.500" y="268.500" textLength="15.500">8.14</text><text x="756.500" y="284.500" textLength="15.500">0.00</text>
                            <text x="770" y="569" textLength="15">0.53</text><text x="770" y="584" textLength="15">0.32</text><text x="770" y="599" textLength="15">0.94</text>
                            <text x="731" y="569" textLength="7.500">03</text><text x="731" y="584" textLength="7.500">52</text><text x="731" y="599" textLength="7.500">52</text>
                            <text x="738.500" y="554" font-weight="bold" textLength="15">mm)</text><text x="776.500" y="554" font-weight="bold" textLength="26">V (m/s)</text>
                        </g>
                        <text x="723" y="472" font-size="11" font-weight="bold" textLength="30" fill="#111">Cross</text>
                        <g class="font-['Liberation_Serif',serif]" font-size="11.500" fill="#222"><text x="723" y="495.500" textLength="63">ndo una línea</text><text x="723" y="508" textLength="63">ndo una velo-</text></g>

                        <path d="M831 602L834 380L838 144L1233 149L1229 410L1226.500 602" fill="none" stroke="#666"/>
                        <g stroke="#888" fill="none">
                            <path d="M920.500 183L918.500 385L915.500 585M917 183h8M915 385h7M912 585h7M952 165L1152 371M949 168l6-6M1149 374l7-6M928 601h202M928 599v4M1130 599v4"/>
                        </g>
                        <g stroke="#222" stroke-width="1.100" fill="none">
                            <path d="M924 146L937 177" marker-end="url(#tip)"/>
                            <path d="M940 187L939 292" marker-end="url(#tip)"/><path d="M939 292L938 381"/>
                            <path d="M942 186L1039 286" marker-end="url(#tip)"/><path d="M1039 286L1134 384"/>
                            <path d="M1133 386.500L1032 385.500" marker-end="url(#tip)"/><path d="M1032 385.500L941 384"/>
                            <path d="M938 387L935.700 487" marker-end="url(#tip)"/><path d="M935.700 487L934.500 581"/>
                            <path d="M1136 390L1134.200 491" marker-end="url(#tip)"/><path d="M1134.200 491L1133.500 583"/>
                            <path d="M937 584.500L1040 585.500" marker-end="url(#tip)"/><path d="M1040 585.500L1131 586"/>
                            <path d="M939 382L958 364.500" marker-end="url(#tip)"/>
                            <path d="M1139 388L1168 402.500" marker-end="url(#tip)"/>
                            <path d="M1136 586L1170 567.500" marker-end="url(#tip)"/>
                            <path d="M977 311c-1-15 12-21 21-20s17 7 18.500 17" stroke="#777" marker-end="url(#tip)"/>
                            <path d="M1002.500 484c0-15 10-21 19-20.500s18 7 21.500 17.500" stroke="#777" marker-end="url(#tip)"/>
                            <path d="M1024 313h8.500M1028.200 309v8.500M1050 488.500h8.500M1054.200 484.500v8.500" stroke-width=".9"/>
                        </g>
                        <g fill="#fff" stroke="#222">
                            <circle cx="940" cy="184" r="2.700" stroke-width="1.400"/><circle cx="938" cy="384" r="2.700"/><circle cx="1136" cy="387" r="2.700"/><circle cx="934.500" cy="584" r="2.700"/><circle cx="1133.500" cy="586" r="2.700"/>
                            <g stroke="#444"><rect x="944.500" y="206.500" width="18" height="23.500" rx="5.500"/><rect x="942.500" y="390" width="17.500" height="25" rx="5.500"/><rect x="1112.500" y="392.500" width="18" height="23.500" rx="5.500"/><rect x="939.500" y="556" width="18" height="23" rx="5.500"/><rect x="1110" y="557.500" width="18" height="23.500" rx="5.500"/></g>
                        </g>
                        <path d="M995.200 309.500h4v17.500h-4zM1017.200 483h4.300v17.500h-4.300zM1027.700 483h4.300v17.500h-4.300z" fill="#111"/>
                        <g font-size="12" fill="#111">
                            <g stroke="#111" stroke-width=".2" font-size="11.500"><text x="950" y="222">1</text><text x="947.500" y="407">2</text><text x="1118" y="408.500">3</text><text x="945.500" y="571.500">5</text><text x="1115.500" y="573">4</text></g>
                            <text x="881.500" y="163" textLength="44">34.2 L/s</text>
                            <text x="1009" y="375.500" textLength="43">5.87 L/s</text>
                            <text x="1006" y="404" textLength="22.500">Ø 6"</text>
                            <text x="1150.500" y="425" textLength="43.500">5.35 L/s</text>
                            <text x="1008.500" y="575.500" textLength="43">5.41 L/s</text>
                            <text x="1061" y="577" textLength="23">Ø 4"</text>
                            <text x="1001.500" y="599.500" textLength="49.500">300.00 m</text>
                            <text x="1146.500" y="553" textLength="49.500">11.28 L/s</text>
                            <text x="870.500" y="595.500" textLength="44">8.14 L/s</text>
                            <text x="950" y="354.500" textLength="44" fill="#777">9.43 L/s</text>
                            <g text-anchor="middle">
                                <text transform="translate(913.500 274) rotate(-89)" textLength="50">300.00 m</text>
                                <text transform="translate(934.500 303.500) rotate(-89)" textLength="22">Ø 6"</text>
                                <text transform="translate(961 285.500) rotate(-89)" textLength="49">17.10 L/s</text>
                                <text transform="translate(911 484) rotate(-89)" textLength="50">300.00 m</text>
                                <text transform="translate(932 505.500) rotate(-89)" textLength="22">Ø 6"</text>
                                <text transform="translate(960 478.500) rotate(-89)" textLength="49">13.55 L/s</text>
                                <text transform="translate(1123.500 489.500) rotate(-89)" textLength="43">5.87 L/s</text>
                                <text transform="translate(1153 509.500) rotate(-89)" textLength="22">Ø 4"</text>
                                <text transform="translate(1048.500 257.500) rotate(42)" textLength="50">424.26 m</text>
                                <text transform="translate(1017 288.500) rotate(42)" textLength="48">17.10 L/s</text>
                                <text transform="translate(1064 301.500) rotate(42)" textLength="22">Ø 8"</text>
                            </g>
                        </g>
                        <circle cx="1023" cy="394" r="14" fill="#f2ee30" fill-opacity=".6"/>
                        <circle cx="1081" cy="549" r=".7" fill="#222"/>
                    </svg>
                    <div class="ml-[8px] flex w-[13px] shrink-0 flex-col items-center bg-[#d9d9d9] py-px">
                        <div class="flex h-3 w-3 shrink-0 items-center justify-center border border-[#ccc] bg-white"><svg class="w-1.5" viewBox="0 0 6 4"><path d="M0 4l3-4 3 4z" fill="#666"/></svg></div>
                        <div class="mt-[244px] h-[23px] w-3 border border-[#c4c4c4] bg-white"></div>
                        <div class="mt-auto flex h-3 w-3 shrink-0 items-center justify-center border border-[#ccc] bg-white"><svg class="w-1.5" viewBox="0 0 6 4"><path d="M0 0l3 4 3-4z" fill="#666"/></svg></div>
                        <svg class="h-[29px] w-3 shrink-0" viewBox="0 0 12 29"><path d="M3 7l3-3 3 3zM3 11l3-3 3 3zM3 18l3 3 3-3zM3 22l3 3 3-3z" fill="#666"/></svg>
                    </div>
                </div>
                <div class="flex h-[14px] shrink-0 items-center">
                    <div class="ml-0.5 flex h-3 w-3 shrink-0 items-center justify-center border border-[#ccc] bg-white"><svg class="h-1.5" viewBox="0 0 4 6"><path d="M4 0L0 3l4 3z" fill="#555"/></svg></div>
                    <div class="flex h-3 w-[504px] bg-[#d9d9d9] pl-[205px]"><div class="w-full border border-[#c4c4c4] bg-white"></div></div>
                    <div class="flex h-3 w-3 shrink-0 items-center justify-center border border-[#ccc] bg-white"><svg class="h-1.5" viewBox="0 0 4 6"><path d="M0 0l4 3-4 3z" fill="#555"/></svg></div>
                </div>
                <div class="flex grow items-center border-t-2 border-[#d3d3d3] pb-0.5 pl-[7px] text-[12px] tracking-[-0.15px] text-[#555]">Haga clic para agregar notas</div>
            </div>
        </div>

        <!-- status bar -->
        <div class="flex h-[18px] shrink-0 items-center border-t border-[#d0d0d0] bg-[#f1f1f1] pb-px text-[9.3px] tracking-[-0.2px] text-[#555]">
            <span class="w-[92px] whitespace-nowrap pl-1">Diapositiva 8 de 12</span>
            <svg class="h-3 w-3" viewBox="0 0 12 12" fill="none" stroke="#666"><path d="M5.500 2.500L1 1v8.500l4.500 1.500h5V6M5.500 2.500V11M5.500 2.500h3M7 8l4-6"/></svg>
            <span class="w-[134px] pl-[11px]">Español (Colombia)</span>
            <svg class="ml-1.5 h-3 w-2.5" viewBox="0 0 10 12" fill="none" stroke="#666"><path d="M0 6.500h10M1 9.500h8"/><path d="M3 4.500l2-3 2 3z" fill="#666"/></svg>
            <span class="w-[38px] pl-[3px]">Notas</span>
            <svg class="h-3 w-3" viewBox="0 0 12 12"><path d="M1 1h10v7H7l-3 3V8H1z" fill="#555"/></svg>
            <span class="w-[63px] pl-[2px]">Comentarios</span>
            <div class="ml-[3px] flex h-[17px] w-[27px] items-center justify-center bg-[#c9c5c4]"><svg class="w-[11px]" viewBox="0 0 11 10" fill="none" stroke="#555"><path d="M.5.5h10v9H.5zM3.500 1v8M5 3.500h4v3H5z"/></svg></div>
            <svg class="ml-2 w-[11px]" viewBox="0 0 11 10" fill="none" stroke="#666"><path d="M.5.5h3v3h-3zM6.500.5h3v3h-3zM.5 6h3v3h-3zM6.500 6h3v3h-3z"/></svg>
            <svg class="ml-4 w-[11px]" viewBox="0 0 11 10" fill="none" stroke="#666"><path d="M1 1l3.500 1V9L1 8zM10 1L6.500 2V9L10 8zM5.500 2v8"/></svg>
            <svg class="ml-4 w-[11px]" viewBox="0 0 11 10" fill="none" stroke="#666"><path d="M1 .5h9M2 .5v5h7v-5M5.500 5.500V8M3.500 9.500l2-1.500 2 1.500"/></svg>
            <svg class="ml-3 h-3 w-[106px]" viewBox="0 0 106 12" fill="none" stroke="#555"><path d="M0 6h6M95 6h7.500M98.700 2.500v7" stroke-width="1.300"/><path d="M10 6h80" stroke="#aaa"/><path d="M52 1.500v9" stroke-width="2.500"/></svg>
            <span class="ml-[6px] w-[32px] tracking-[-0.4px]">110%</span>
            <svg class="w-[11px]" viewBox="0 0 11 11" fill="none" stroke="#666"><path d="M.5.5h10v10H.5zM5.500 0v4M5.500 7v4M0 5.500h4M7 5.500h4" stroke-dasharray="3 1"/></svg>
        </div>
    </div>

    <!-- Dropbox badge -->
    <svg class="absolute left-[1253px] top-[320px] h-[32px] w-[32px]" viewBox="0 0 32 32">
        <circle cx="16" cy="16" r="15" fill="#0d7de4"/>
        <path d="M11 8l5 3.200-5 3.200-5-3.200zM21 8l5 3.200-5 3.200-5-3.200zM11 14.500l5 3.200-5 3.200-5-3.200zM21 14.500l5 3.200-5 3.200-5-3.200zM16 19.500l5 3-5 3-5-3z" fill="#fff"/>
    </svg>

    <!-- taskbar -->
    <div class="flex h-[33px] w-full items-center bg-[#1c1e22] text-white">
        <div class="flex h-full w-[34px] items-center justify-center pl-1.5"><svg class="size-[14px]" viewBox="0 0 14 14"><path d="M0 2l6-1v5.500H0zM7 1l7-1v6.500H7zM0 7.500h6V13l-6-1zM7 7.500h7V14l-7-1z" fill="#fff"/></svg></div>
        <div class="flex h-full w-[293px] items-center bg-[#f0f0f0] pl-2 text-[12px] text-[#444]">
            <svg class="mr-2.5 w-[15px]" viewBox="0 0 15 16"><circle cx="9" cy="6" r="4.700" fill="none" stroke="#222" stroke-width="1.200"/><path d="M5.500 9.500L1 15" stroke="#222" stroke-width="1.200"/></svg>
            <span class="ml-[7px]">Escribe aquí para buscar</span>
        </div>
        <div class="flex w-[41.700px] justify-center"><svg class="w-[15px]" viewBox="0 0 15 14" fill="none" stroke="#e8e8e8"><path d="M1 3.500h9v7H1zM1 0v1.500h9V0M1 14v-1.500h9V14M13 0v14"/><path d="M12 4h2v2h-2z" fill="#fff"/></svg></div>

        <div class="flex h-full w-[38.700px] items-center justify-center"><div class="flex h-full w-8 items-center justify-center border-b-2 border-[#76b0e0] pt-px"><svg class="w-[19px]" viewBox="0 0 20 20"><circle cx="10" cy="10" r="9.500" fill="#e8453c"/><path d="M10 10L1.800 5.200A9.500 9.500 0 0 0 10 19.500l4-7z" fill="#2fa84f"/><path d="M10 10l4.500 2.500L10 19.500A9.500 9.500 0 0 0 18.500 6H10z" fill="#fcc934"/><circle cx="10" cy="10" r="4.500" fill="#fff"/><circle cx="10" cy="10" r="3.500" fill="#4a86e8"/></svg></div></div>
        <div class="flex h-full w-[38.700px] items-center justify-center"><svg class="w-[19px]" viewBox="0 0 20 20"><circle cx="10" cy="10.500" r="9" fill="#ff6a1f"/><path d="M11 1c5 2 9 6 8 11-1 5-5 7-9 7 5-2 6-7 5-10-1-2-4-3-4-8z" fill="#ffc62e"/><circle cx="10" cy="10.500" r="4.500" fill="#3a4fb8"/><path d="M1 9C2 5 3 3 4 2c1 2 4 3 6 4-2 1-4 2-3 4 1 3 5 3 7 1-1 5-10 6-13-2z" fill="#f4402c"/></svg></div>
        <div class="flex h-full w-[38.700px] items-center justify-center"><div class="flex h-full w-8 items-center justify-center border-b-2 border-[#76b0e0] pt-px"><svg class="w-[19px]" viewBox="0 0 20 20"><path d="M0 2h7l2 2h11v14H0z" fill="#e9b949"/><path d="M0 6h20v11H0z" fill="#fbdc80"/><path d="M4 18v-7h12v7h-3v-4H7v4z" fill="#3b93d8"/></svg></div></div>
        <div class="flex h-full w-[38.700px] items-center justify-center"><svg class="w-[19px]" viewBox="0 0 20 20"><path d="M6.500 5c0-6 7-6 7 0" fill="none" stroke="#eee" stroke-width="1.400"/><path d="M0 5h20v12.500q0 2-2 2H2q-2 0-2-2z" fill="#f7f7f7"/><path d="M6 8h3.500v3.500H6z" fill="#e8502a"/><path d="M10.500 8H14v3.500h-3.500z" fill="#7cb82f"/><path d="M6 12.500h3.500V16H6z" fill="#2e9ade"/><path d="M10.500 12.500H14V16h-3.500z" fill="#f4b91d"/></svg></div>
        <div class="w-[38.700px]"></div>
        <div class="flex h-full w-[38.700px] items-center justify-center pl-0.5"><svg class="w-[20px]" viewBox="0 0 20 20"><path d="M0 0h20v20H0z" fill="#050505"/><path d="M7.500 16V4l5 12V4" fill="none" stroke="#d3121c" stroke-width="2.200"/></svg></div>
        <div class="flex h-full w-[38.700px] items-center justify-center pl-0.5"><svg class="w-[18px]" viewBox="0 0 20 20"><path d="M10 3h9v14h-9z" fill="#fff" stroke="#0b7a68"/><path d="M12 6h5M12 9h5M12 12h5" stroke="#0b7a68" stroke-width="1.500"/><path d="M0 2l12-2v20L0 18z" fill="#0b7a68"/><text x="2" y="14" font-size="11" font-weight="bold" fill="#fff">P</text></svg></div>
        <div class="flex h-full w-[38.700px] items-center justify-center pl-0.5"><svg class="w-[18px]" viewBox="0 0 20 20"><path d="M10 3h9v14h-9z" fill="#fff" stroke="#2a5699"/><path d="M12 6h5M12 9h5M12 12h5M12 14.500h5" stroke="#2a5699" stroke-width="1.200"/><path d="M0 2l12-2v20L0 18z" fill="#2a5699"/><text x="1" y="14" font-size="10.500" font-weight="bold" fill="#fff" textLength="10" lengthAdjust="spacingAndGlyphs">W</text></svg></div>
        <div class="flex h-full w-[38.700px] items-center justify-center"><svg class="w-[18px]" viewBox="0 0 20 20"><path d="M10 3h9v14h-9z" fill="#fff" stroke="#a4262c"/><path d="M12 6h5M12 9h5M12 12h5M12 14.500h5" stroke="#a4262c" stroke-width="1.500"/><path d="M0 2l12-2v20L0 18z" fill="#a82a33"/><text x="2" y="14" font-size="11" font-weight="bold" fill="#fff">A</text></svg></div>
        <div class="flex h-full w-[38.700px] items-center justify-center"><svg class="w-[18px]" viewBox="0 0 20 20"><path d="M10 4h10v11H10z" fill="#fff"/><path d="M12 8l3 3 5-5" stroke="#0a71c4" stroke-width="2" fill="none"/><path d="M0 2l12-2v20L0 18z" fill="#0a71c4"/><text x="1.500" y="14" font-size="11" font-weight="bold" fill="#fff">O</text></svg></div>
        <div class="flex h-full w-[38.700px] items-center justify-center"><svg class="w-[18px]" viewBox="0 0 20 20"><path d="M10 3h9v14h-9z" fill="#fff" stroke="#80397b"/><path d="M12 6h3M12 9h3M12 12h3M17 3v14" stroke="#80397b" stroke-width="1.500"/><path d="M0 2l12-2v20L0 18z" fill="#80397b"/><text x="1.500" y="14" font-size="11" font-weight="bold" fill="#fff">N</text></svg></div>
        <div class="flex h-full w-[38.700px] items-center justify-center"><div class="flex h-full w-8 items-center justify-center border-b-2 border-[#76b0e0] pt-px"><svg class="w-[18px]" viewBox="0 0 20 20"><path d="M10 3h9v14h-9z" fill="#fff" stroke="#1f7246"/><path d="M12 6h6M12 9h6M12 12h6M12 14.500h6M15 4v12" stroke="#1f7246"/><path d="M0 2l12-2v20L0 18z" fill="#1f7246"/><text x="2" y="14" font-size="11" font-weight="bold" fill="#fff">X</text></svg></div></div>
        <div class="flex h-full w-[38.700px] items-center justify-center"><svg class="w-[19px]" viewBox="0 0 20 20"><path d="M6 0a6 6 0 0 1 4 1.500A9 9 0 0 1 18.500 12 5.500 5.500 0 0 1 11 18.800 9 9 0 0 1 1.500 9 6 6 0 0 1 6 0z" fill="#1aa7e8"/><text x="6" y="15" font-size="13.500" font-weight="bold" fill="#fff">S</text></svg></div>
        <div class="flex h-full w-[38.700px] items-center justify-center border-b-2 border-[#76b0e0] bg-[#515459]"><svg class="w-[18px]" viewBox="0 0 20 20"><path d="M10 3h9v14h-9z" fill="#fff" stroke="#d24726"/><path d="M12 12h5M12 14.500h5" stroke="#d24726"/><circle cx="14.500" cy="7.500" r="2.500" fill="#d24726"/><path d="M0 2l12-2v20L0 18z" fill="#d24726"/><text x="2" y="14" font-size="11" font-weight="bold" fill="#fff">P</text></svg></div>
        <div class="flex h-full w-[38.700px] items-center justify-center"><svg class="w-[19px]" viewBox="0 0 20 20"><circle cx="10" cy="10" r="9.500" fill="#5b8def"/><path d="M10 10l-8-5A9.500 9.500 0 0 0 9 19.500l4-7z" fill="#3f6fd0"/><path d="M10 10h9.500A9.500 9.500 0 0 1 9 19.500z" fill="#a9c7f7"/><circle cx="10" cy="10" r="4.500" fill="#fff"/><circle cx="10" cy="10" r="3.500" fill="#4f83e6"/></svg></div>
        <div class="flex h-full w-[38.700px] items-center justify-center"><div class="flex h-full w-8 items-center justify-center border-b-2 border-[#76b0e0]"><svg class="w-[21px]" viewBox="0 0 20 20"><path d="M10 .5a3.800 3.800 0 0 1 3.500 5.500L12 8h6.500l.5 3-2 1.500 1 1.500-4 1.500L10 19.500 6 15.500 2 14l1-1.500L1 11l.5-3H8L6.500 6A3.800 3.800 0 0 1 10 .5z" fill="#14d8de"/><path d="M10 4v12M5 9l5 5 5-5M8 4.500h4" stroke="#0a3b44" stroke-width="1.300" fill="none"/></svg></div></div>
        <div class="flex h-full w-[38.700px] items-center justify-center"><div class="flex h-full w-8 items-center justify-center border-b-2 border-[#76b0e0]"><svg class="w-[19px]" viewBox="0 0 20 20"><path d="M1 6.500Q1 4 3.200 4.200 3.500 1.500 6 1.800 8 0 10.500 1.300 13.500.5 14.500 3q3-.5 3.200 2.500 1.600 1 1.300 4l-1.500 4.500-3.500 4H7l-4-5z" fill="#e87d1c"/><path d="M5.500 4l1 5M9.700 3v6M14 4.500L13 9M4 11q4-2 7 0t5-1M8 14q3-2 6-.5" stroke="#7a3406" stroke-width="1" fill="none"/></svg></div></div>

        <svg class="ml-[6px] h-[18px] w-[118px]" viewBox="1032 694 118 18" fill="none" stroke="#f2f2f2">
            <path d="M1035 706l5-5 5 5" stroke-width="1.300"/>
            <path d="M1056 701h10v7h-10z" fill="#eee"/><path d="M1054 699v4M1054 700h5M1067 703v3"/>
            <path d="M1075 707a8 8 0 0 1 9-9M1078 708a6 6 0 0 1 7-7M1081 708a4 4 0 0 1 4-4" stroke="#bbb"/><circle cx="1084" cy="707" r="1.200" fill="#fff" stroke="none"/>
            <path d="M1094 706q-2-4 2-4 1-4 5-2 4 0 3 5z" fill="#ddd" stroke="none"/><circle cx="1102" cy="706.500" r="4" fill="#d8303e" stroke="none"/><path d="M1100.500 705l3 3M1103.500 705l-3 3"/>
            <path d="M1117 698l3 2-3 2-3-2zM1123 698l3 2-3 2-3-2zM1117 702l3 2-3 2-3-2z" fill="#fff" stroke="none"/><circle cx="1122.500" cy="706" r="4" fill="#2a7de1" stroke="none"/><path d="M1120.500 706h4M1123 704.500l2 1.500-2 1.500" stroke-width=".8"/>
            <path d="M1133.500 701.500h2l3-3v9l-3-3h-2zM1140.500 701q1.500 2 0 4M1142.500 699.500q2.500 3.500 0 7"/><path d="M1144.500 698q4 5 0 10" stroke="#888"/>
        </svg>
        <span class="ml-[6px] text-[10px] tracking-[-0.2px]">ESP</span>
        <div class="ml-2.5 w-[47px] pb-0.5 text-center text-[10px] leading-[15px] tracking-[-0.2px]">7:39 PM<br>5/29/2020</div>
        <svg class="ml-[18px] h-6 w-[22px]" viewBox="0 0 22 24"><path d="M1 4h14v11H8l-4 4v-4H1z" fill="#f5f5f5"/><path d="M3.500 7h9M3.500 9.500h9M3.500 12h6" stroke="#444"/><circle cx="13.500" cy="16.500" r="6" fill="#333" stroke="#999" stroke-width=".7"/><text x="11" y="20" font-size="9.500" fill="#fff">8</text></svg>
    </div>
</body>
</html>
